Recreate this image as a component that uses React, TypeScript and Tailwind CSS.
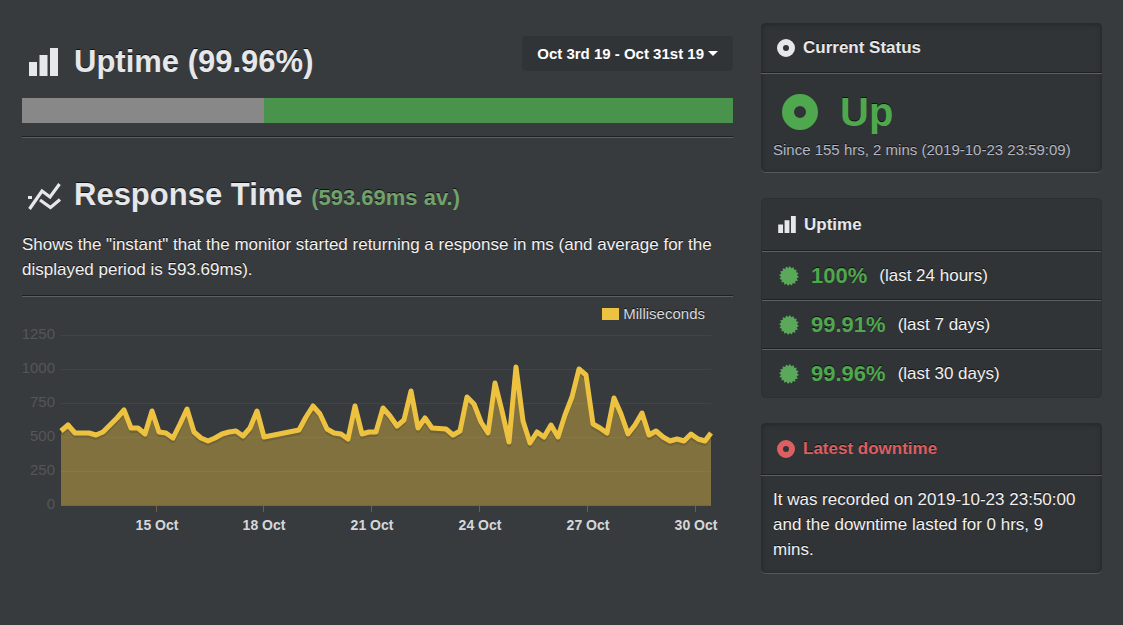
import { useState } from 'react';

const POINTS: [number, number][] = [
    [0, 431], [7, 425], [14, 433], [28, 433], [35, 435], [42, 432], [56, 418], [63, 410], [70, 428], [77, 428], [84, 434],
    [91, 411], [98, 432], [105, 433], [112, 438], [119, 424], [126, 409], [133, 432], [140, 438], [147, 441], [154, 438], [161, 434],
    [168, 432], [175, 431], [182, 436], [189, 428], [196, 411], [203, 437], [238, 430], [245, 417], [252, 406], [259, 414],
    [266, 429], [273, 433], [280, 434], [287, 439], [294, 406], [301, 434], [308, 432], [315, 432], [322, 408], [329, 416], [336, 426],
    [343, 420], [350, 391], [357, 428], [364, 418], [371, 428], [385, 429], [392, 435], [399, 431], [406, 397], [413, 404],
    [420, 422], [427, 433], [434, 383], [441, 411], [448, 442], [455, 367], [462, 421], [469, 443], [476, 432], [483, 437],
    [490, 425], [497, 437], [504, 415], [511, 397], [518, 369], [525, 375], [532, 424], [539, 428], [546, 433], [553, 398],
    [560, 414], [567, 434], [574, 425], [581, 413], [588, 435], [595, 431], [602, 437], [609, 441], [616, 439], [623, 441],
    [630, 434], [637, 439], [644, 441], [650, 433],
];

const Y_TICKS = [
    { label: '1250', y: 335 },
    { label: '1000', y: 369 },
    { label: '750', y: 403 },
    { label: '500', y: 437 },
    { label: '250', y: 471 },
    { label: '0', y: 505 },
];

const X_TICKS = [
    { label: '15 Oct', x: 96 },
    { label: '18 Oct', x: 203 },
    { label: '21 Oct', x: 311 },
    { label: '24 Oct', x: 419 },
    { label: '27 Oct', x: 527 },
    { label: '30 Oct', x: 635 },
];

const STATS = [
    { value: '100%', period: '(last 24 hours)' },
    { value: '99.91%', period: '(last 7 days)' },
    { value: '99.96%', period: '(last 30 days)' },
];

function BarsIcon({ className }: { className: string }) {
    return (
        <svg viewBox="0 0 29 28" fill="currentColor" className={className} aria-hidden="true">
            <path d="M0 14h8v14H0zM10.500 7h8v21h-8zM21 0h8v28h-8z" />
        </svg>
    );
}

function RecordIcon({ className }: { className: string }) {
    return (
        <svg viewBox="0 0 36 36" fill="none" stroke="currentColor" strokeWidth="12" className={className} aria-hidden="true">
            <circle cx="18" cy="18" r="12" />
        </svg>
    );
}

function LinesIcon({ className }: { className: string }) {
    return (
        <svg viewBox="0 0 34 28" fill="none" stroke="currentColor" strokeWidth="3.2" className={className} aria-hidden="true">
            <path d="M1.500 26 14 8l8 6L31.500 1M0 14.500h4M12 17l10.500 7.500 9.500-8" />
        </svg>
    );
}

// 16-pointed badge
const BURST = Array.from({ length: 32 }, (_, i) => {
    const r = i % 2 ? 8 : 10;
    const a = (i * Math.PI) / 16 + Math.PI / 32;
    return `${(10 + r * Math.cos(a)).toFixed(2)},${(10 + r * Math.sin(a)).toFixed(2)}`;
}).join(' ');

function BurstIcon({ className }: { className: string }) {
    return (
        <svg viewBox="0 0 20 20" fill="currentColor" className={className} aria-hidden="true">
            <polygon points={BURST} />
        </svg>
    );
}

function Divider() {
    return <hr className="h-[2px] border-t border-b border-t-[#1e2022] border-b-[#5d6062]" />;
}

function ResponseChart() {
    const line = POINTS.map(([x, y]) => `${x + 39},${y - 298}`).join(' ');

    return (
        <figure>
            <figcaption className="flex items-center justify-end gap-1 pt-[7px] pr-7 text-[15px] leading-5 text-[#d5d7da]">
                <span className="h-3 w-[17px] bg-[#edc240]" />
                Milliseconds
            </figcaption>
            <svg viewBox="0 26 711 218" className="block w-full [text-shadow:none]" role="img" aria-label="Response time">
                {Y_TICKS.map((tick) => (
                    <g key={tick.label}>
                        <text x="33" y={tick.y - 294} textAnchor="end" fontSize="15" fill="#545658">{tick.label}</text>
                        <path d={`M39 ${tick.y - 297.5}H689`} stroke="#424547" />
                    </g>
                ))}
                <polygon points={`39,208 ${line} 689,208`} fill="#edc240" fillOpacity="0.4" />
                <path d="M39 207.5H689" stroke="#726943" />
                <polyline points={line} transform="translate(0 3)" fill="none" stroke="#000" strokeOpacity="0.12" strokeWidth="4" strokeLinejoin="round" />
                <polyline points={line} fill="none" stroke="#edc240" strokeWidth="5" strokeLinejoin="round" />
                {X_TICKS.map((tick) => (
                    <g key={tick.label}>
                        <path d={`M${tick.x + 38.5} 208v6`} stroke="#6c6344" />
                        <text x={tick.x + 39} y="232" textAnchor="middle" fontSize="14" fontWeight="700" fill="#d5d7da">{tick.label}</text>
                    </g>
                ))}
            </svg>
        </figure>
    );
}

export default function App() {
    const [open, setOpen] = useState(false);

    return (
        <div className="flex min-h-screen items-start gap-7 bg-[#383b3e] pt-[23px] pr-[21px] pb-12 pl-[22px] font-['Liberation_Sans',Arial,sans-serif] text-[17px] leading-[25px] text-[#f0f0f0] [text-shadow:0_-1px_0_#111]">
            <main className="min-w-0 flex-1 pt-[13px]">
                <section>
                    <div className="flex items-start justify-between">
                        <h1 className="flex items-center pt-[3px] pl-[7px] text-[31px] leading-[45px] font-bold text-[#e6e7ea]">
                            <BarsIcon className="mr-4 h-7 w-[29px]" />
                            Uptime (99.96%)
                        </h1>
                        <button
                            type="button"
                            aria-expanded={open}
                            onClick={() => setOpen(!open)}
                            className="flex h-[35px] items-center gap-1 rounded bg-[#313437] px-[15px] text-[15px] font-bold text-white"
                        >
                            Oct 3rd 19 - Oct 31st 19
                            <svg viewBox="0 0 10 5" className="h-[5px] w-[10px]" fill="currentColor" aria-hidden="true">
                                <path d="M0 0h10L5 5z" />
                            </svg>
                        </button>
                    </div>
                    <div className="mt-[14px] mb-[13px] flex h-[25px]">
                        <div className="w-[34%] bg-[#888]" />
                        <div className="flex-1 bg-[#4a934c]" />
                    </div>
                    <Divider />
                </section>

                <section className="pt-[35px]">
                    <h2 className="flex items-center pl-[6px] text-[31px] leading-[44px] font-bold text-[#e6e7ea]">
                        <LinesIcon className="mr-3 h-7 w-[34px]" />
                        <span>
                            Response Time <small className="text-[22px] text-[#71a26c]">(593.69ms av.)</small>
                        </span>
                    </h2>
                    <p className="mt-3 mb-[13px]">
                        Shows the "instant" that the monitor started returning a response in ms (and average for the displayed period is 593.69ms).
                    </p>
                    <Divider />
                    <ResponseChart />
                </section>
            </main>

            <aside className="flex w-[341px] shrink-0 flex-col gap-[25px]">
                <section className="rounded-[5px] border-b border-[#56595b] bg-[#313437] shadow-[inset_0_1px_5px_#222426]">
                    <h3 className="flex h-[49px] items-center pl-4 font-bold text-[#e6e7ea]">
                        <RecordIcon className="mr-2 h-[18px] w-[18px]" />
                        Current Status
                    </h3>
                    <Divider />
                    <div className="px-3 pt-[13px] pb-[10px]">
                        <p className="flex items-center pl-[9px] text-[40px] leading-[50px] font-bold text-[#4fa84d]">
                            <RecordIcon className="mr-[22px] h-9 w-9" />
                            Up
                        </p>
                        <p className="text-[15px] text-[#b3b7c4]">Since 155 hrs, 2 mins (2019-10-23 23:59:09)</p>
                    </div>
                </section>

                <section className="rounded-[5px] border border-[#2d3032] bg-[#313437]">
                    <h3 className="flex h-[51px] items-center pl-4 font-bold text-[#e6e7ea]">
                        <BarsIcon className="mr-2 h-[17px] w-[18px]" />
                        Uptime
                    </h3>
                    <ul>
                        {STATS.map((stat) => (
                            <li key={stat.value}>
                                <Divider />
                                <div className="flex h-[47px] items-center pl-[17px]">
                                    <BurstIcon className="mr-3 h-5 w-5 text-[#5aa95a]" />
                                    <strong className="mr-3 text-[22px] text-[#4fa84d]">{stat.value}</strong>
                                    {stat.period}
                                </div>
                            </li>
                        ))}
                    </ul>
                </section>

                <section className="rounded-[5px] border-b border-[#56595b] bg-[#313437] shadow-[inset_0_1px_5px_#222426]">
                    <h3 className="flex h-[51px] items-center pl-4 font-bold text-[#dc5f62]">
                        <RecordIcon className="mr-2 h-[18px] w-[18px]" />
                        Latest downtime
                    </h3>
                    <Divider />
                    <p className="py-[11px] pr-4 pl-3">It was recorded on 2019-10-23 23:50:00 and the downtime lasted for 0 hrs, 9 mins.</p>
                </section>
            </aside>
        </div>
    );
}
